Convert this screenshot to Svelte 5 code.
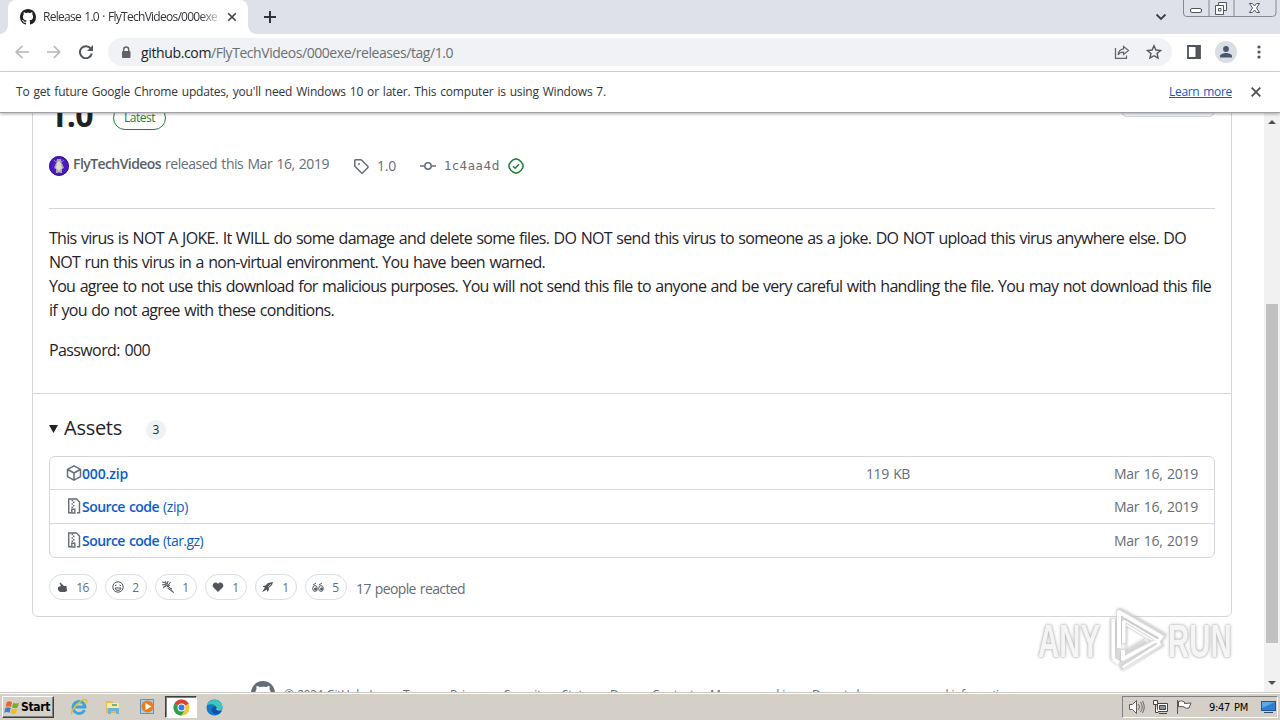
<script>
  const assets = [
    { icon: 'cube', name: '000.zip', ext: '', w: 46, ew: 0, size: '119 KB' },
    { icon: 'zip', name: 'Source code', ext: '(zip)', w: 77, ew: 25, size: '' },
    { icon: 'zip', name: 'Source code', ext: '(tar.gz)', w: 77, ew: 40, size: '' }
  ];
  const reactions = [
    { icon: 'thumb', n: 16 },
    { icon: 'smile', n: 2 },
    { icon: 'party', n: 1 },
    { icon: 'heart', n: 1 },
    { icon: 'rocket', n: 1 },
    { icon: 'eyes', n: 5 }
  ];
  const footer = [
    { t: '© 2024 GitHub, Inc.', slot: 119, w: 103 },
    { t: 'Terms', slot: 47, w: 31 },
    { t: 'Privacy', slot: 54, w: 39 },
    { t: 'Security', slot: 58, w: 43 },
    { t: 'Status', slot: 48, w: 33 },
    { t: 'Docs', slot: 42, w: 26 },
    { t: 'Contact', slot: 58, w: 42 },
    { t: 'Manage cookies', slot: 102, w: 87 },
    { t: 'Do not share my personal information', slot: 210, w: 200 }
  ];
  const body = [
    ['This virus is NOT A JOKE. It WILL do some damage and delete some files. DO NOT send this virus to someone as a joke. DO NOT upload this virus anywhere else. DO', 1137],
    ['NOT run this virus in a non-virtual environment. You have been warned.', 496],
    ['You agree to not use this download for malicious purposes. You will not send this file to anyone and be very careful with handling the file. You may not download this file', 1162],
    ['if you do not agree with these conditions.', 285]
  ];

  // Tracks text so that it spans the given width.
  function fit(node, width) {
    const n = node.textContent.length;
    const natural = node.getBoundingClientRect().width;
    node.style.letterSpacing = (width - natural) / n + 'px';
  }
</script>

{#snippet octocat(size)}
  <svg width={size} height={size} viewBox="0 0 16 16" fill="currentColor"><path d="M8 0C3.58 0 0 3.58 0 8c0 3.54 2.29 6.53 5.47 7.59.4.07.55-.17.55-.38 0-.19-.01-.82-.01-1.49-2.01.37-2.53-.49-2.69-.94-.09-.23-.48-.94-.82-1.13-.28-.15-.68-.52-.01-.53.63-.01 1.08.58 1.23.82.72 1.21 1.87.87 2.33.66.07-.52.28-.87.51-1.07-1.78-.2-3.64-.89-3.64-3.95 0-.87.31-1.59.82-2.15-.08-.2-.36-1.02.08-2.12 0 0 .67-.21 2.2.82.64-.18 1.32-.27 2-.27s1.36.09 2 .27c1.53-1.04 2.2-.82 2.2-.82.44 1.1.16 1.92.08 2.12.51.56.82 1.27.82 2.15 0 3.07-1.87 3.75-3.65 3.95.29.25.54.73.54 1.48 0 1.07-.01 1.93-.01 2.2 0 .21.15.46.55.38A8.01 8.01 0 0 0 16 8c0-4.42-3.58-8-8-8z" /></svg>
{/snippet}

<div class="screen">
  <div class="tabs">
    <div class="tab">
      {@render octocat(16)}
      <span class="tabtitle"><span use:fit={174}>Release 1.0 · FlyTechVideos/000exe</span></span>
      <svg class="tabx" width="10" height="10" viewBox="0 0 10 10" stroke="#3c4043" stroke-width="1.6"><path d="M1.2 1.2l7.6 7.6M8.8 1.2L1.2 8.8" /></svg>
    </div>
    <svg class="plus" width="12" height="12" viewBox="0 0 12 12" stroke="#303338" stroke-width="2"><path d="M6 0v12M0 6h12" /></svg>
    <svg class="chev" width="12" height="8" viewBox="0 0 12 8" fill="none" stroke="#3c4043" stroke-width="1.8"><path d="M1.5 1.5L6 6l4.500-4.500" /></svg>
    <div class="winbtns">
      <svg width="94" height="17" viewBox="0 0 94 17" fill="none" stroke="#85888e">
        <path d="M.5 0v13q0 3.500 3 3.500h86q3.500 0 3.500-3.500V0M26 0v16M51 0v16" />
        <rect x="7.500" y="8.500" width="11" height="4" rx="1.500" fill="#fff" stroke="#53565d" />
        <path d="M35.500 2.500h8v8h-8z" fill="#f4f5f7" stroke="#53565d" />
        <path d="M32.500 5.500h8v9h-8z" fill="#fff" stroke="#53565d" />
        <path d="M35.500 8.500h2.500v2.500h-2.500z" stroke="#53565d" />
        <path d="M66.500 3.500h3l2 2.500 2-2.500h3l-3 4.500 3 4.500h-3l-2-2.500-2 2.500h-3l3-4.500z" fill="#fff" stroke="#53565d" />
      </svg>
    </div>
  </div>

  <div class="toolbar">
    <svg width="14" height="14" viewBox="0 0 14 14" fill="none" stroke="#b4b7bb" stroke-width="1.7"><path d="M14 7H1.500M7.200 1L1.200 7l6 6" /></svg>
    <svg class="fwd" width="14" height="14" viewBox="0 0 14 14" fill="none" stroke="#b4b7bb" stroke-width="1.7"><path d="M0 7h12.500M6.800 1l6 6-6 6" /></svg>
    <svg class="reload" width="14" height="14" viewBox="0 0 14 14" fill="none" stroke="#53565b" stroke-width="2"><path d="M12 4A6 6 0 1 0 12.800 8.500" /><path d="M14 0v6H8z" fill="#53565b" stroke="none" /></svg>
    <div class="omni">
      <svg width="10" height="13" viewBox="0 0 10 13"><rect x="1" y="5" width="8.500" height="7" rx="1" fill="#5f6368" /><path d="M2.700 6V3.500a2.500 2.500 0 0 1 5 0V6" fill="none" stroke="#5f6368" stroke-width="1.400" /></svg>
      <span class="url"><span use:fit={70} class="host">github.com</span><span class="path" use:fit={242}>/FlyTechVideos/000exe/releases/tag/1.0</span></span>
      <svg width="16" height="14" viewBox="0 0 16 14" fill="none" stroke="#5f6368" stroke-width="1.200"><path d="M1.500 3v10.400h11V10.500" /><path d="M9.500 1.500l5 4-5 4V7.200C7 7.200 5.200 8 4 9.800 4.400 6.500 6.200 4.200 9.500 3.800z" /></svg>
      <svg class="star" width="16" height="16" viewBox="0 0 16 16" fill="none" stroke="#55585d" stroke-width="1.400"><path d="M8 1.700l1.900 4.300 4.700.45-3.550 3.100 1.050 4.600L8 11.700l-4.100 2.450 1.050-4.600L1.400 6.450l4.700-.45z" /></svg>
    </div>
    <svg class="side" width="14" height="14" viewBox="0 0 14 14"><path d="M1 1h12v12H1z" fill="none" stroke="#505357" stroke-width="1.800" /><path d="M8.500 1H13v12H8.500z" fill="#505357" /></svg>
    <svg class="person" width="22" height="22" viewBox="0 0 22 22"><circle cx="11" cy="11" r="11" fill="#dadde3" /><circle cx="11" cy="8" r="2.900" fill="#4a5570" /><path d="M5 16.500v-1.500c0-2 4-3 6-3s6 1 6 3v1.500z" fill="#4a5570" /></svg>
    <svg class="dots" width="4" height="14" viewBox="0 0 4 14" fill="#505357"><circle cx="2" cy="2" r="1.600" /><circle cx="2" cy="7" r="1.600" /><circle cx="2" cy="12" r="1.600" /></svg>
  </div>

  <div class="infobar">
    <span use:fit={590}>To get future Google Chrome updates, you'll need Windows 10 or later. This computer is using Windows 7.</span>
    <a class="learn" href="#learn"><span use:fit={63}>Learn more</span></a>
    <svg width="10" height="10" viewBox="0 0 10 10" stroke="#505357" stroke-width="1.900"><path d="M.7.7l8.600 8.600M9.300.7L.7 9.300" /></svg>
  </div>

  <div class="viewport">
    <div class="page">
      <section class="card">
        <div class="title"><h1 use:fit={44}>1.0</h1><span class="latest"><span use:fit={31}>Latest</span></span><span class="compare"></span></div>
        <div class="meta">
          <svg width="20" height="20" viewBox="0 0 20 20"><circle cx="10" cy="10" r="10" fill="#4a1cc0" /><circle cx="10" cy="10" r="9.300" fill="none" stroke="#32109a" /><path d="M8 3h4l1 4 2 5-2 1v4h-2l-1-1-1 1H7v-4l-2-1 2-5z" fill="#aaa4b3" /><path d="M8 7l2-2 2 3 1 4-3 3-3-3z" fill="#e0dccd" /><path d="M5 4l3 3M15 4l-3 3" stroke="#8d78c6" /></svg>
          <span class="who"><b use:fit={88}>FlyTechVideos</b><span class="rel" use:fit={164}>released this Mar 16, 2019</span></span>
          <svg class="tag" width="16" height="16" viewBox="0 0 16 16" fill="#656d76"><path d="M1 7.775V2.750C1 1.784 1.784 1 2.750 1h5.025c.464 0 .910.184 1.238.513l6.250 6.250a1.750 1.750 0 0 1 0 2.474l-5.026 5.026a1.750 1.750 0 0 1-2.474 0l-6.250-6.250A1.752 1.752 0 0 1 1 7.775Zm1.500 0c0 .066.026.130.073.177l6.250 6.250a.250.250 0 0 0 .354 0l5.025-5.025a.250.250 0 0 0 0-.354l-6.250-6.250a.250.250 0 0 0-.177-.073H2.750a.250.250 0 0 0-.250.250ZM6 5a1 1 0 1 1 0 2 1 1 0 0 1 0-2Z" /></svg>
          <span class="small" use:fit={19}>1.0</span>
          <svg class="commit" width="16" height="16" viewBox="0 0 16 16" fill="none" stroke="#656d76" stroke-width="1.500"><circle cx="8" cy="8" r="3.200" /><path d="M0 8h4.500M11.500 8H16" /></svg>
          <code class="small sha" use:fit={56}>1c4aa4d</code>
          <svg class="verified" width="16" height="16" viewBox="0 0 16 16" fill="none" stroke="#1a7f37" stroke-width="1.500"><path d="M5.300 1.700L8 .9l2.700.8 2.600 2.300 1.700 2.700v2.600l-1.700 2.700-2.600 2.300-2.700.8-2.700-.8L2.700 12 1 9.300V6.700L2.700 4z" /><path d="M5 8.200l2.100 2L11 6.200" /></svg>
        </div>
        <div class="notes">
          <p>{#each body as [text, w]}<span class="line"><span use:fit={w}>{text}</span></span>{/each}</p>
          <p><span class="line"><span use:fit={101}>Password: 000</span></span></p>
        </div>
        <div class="assets">
          <div class="ahead"><svg width="9" height="8" viewBox="0 0 9 8"><path d="M0 0h9L4.500 8z" fill="#1f2328" /></svg><h3 use:fit={58}>Assets</h3><span class="count">3</span></div>
          <ul>
            {#each assets as a}
              <li>
                {#if a.icon === 'cube'}
                  <svg width="16" height="16" viewBox="0 0 16 16" fill="none" stroke="#656d76" stroke-width="1.500" stroke-linejoin="round"><path d="M8 .8l6.500 3.600v7.200L8 15.200l-6.500-3.600V4.400zM1.700 4.500L8 8l6.300-3.500M8 8v7" /></svg>
                {:else}
                  <svg width="16" height="16" viewBox="0 0 16 16" fill="none" stroke="#656d76" stroke-width="1.400"><path d="M5 14.800H2.700V1h7.800l3 3v10.800H11" /><path d="M5.500 2.500H7M7 4.300h1.500M5.500 6H7M7 7.700h1.500M5.500 9.300H7" /><path d="M5.800 15v-3.800h3V15z" /></svg>
                {/if}
                <span class="aname"><b use:fit={a.w}>{a.name}</b>{#if a.ext}<span class="ext" use:fit={a.ew}>{a.ext}</span>{/if}</span>
                <span class="size">{#if a.size}<span use:fit={44}>{a.size}</span>{/if}</span>
                <span class="date"><span use:fit={84}>Mar 16, 2019</span></span>
              </li>
            {/each}
          </ul>
          <div class="reacts">
            {#each reactions as r}
              <span class="pill" class:wide={r.n > 9}>
                <svg width="12" height="12" viewBox="0 0 12 12" fill="none" stroke="#51565d">
                  {#if r.icon === 'thumb'}
                    <path d="M2 6l3-1-1.500-3 1-.5L8 5h2.500l.5 5-2 1H4L2 9z" fill="#51565d" stroke="none" />
                  {:else if r.icon === 'smile'}
                    <circle cx="6" cy="6" r="5.200" /><path d="M3 7h6q-.5 2.500-3 2.500T3 7zM3 4.700l1.500-.7M9 4.700L7.500 4" />
                  {:else if r.icon === 'party'}
                    <path d="M0 1l4 1M3 0l2 3M0 4l4-1M6 0L5 4M8.500 1l-3 4M1 7l3-2M3 3l5 4M8 4L4.500 6M1.500 5.500l3-1M6 5l5.500 6.500L5.500 7M8 7l2 1" />
                  {:else if r.icon === 'heart'}
                    <path d="M6 11L1 6C-.5 3 3.500-.5 6 3 8.500-.5 12.500 3 11 6z" fill="#51565d" stroke="none" />
                  {:else if r.icon === 'rocket'}
                    <path d="M11 1L6 2 3.500 4.500 1 5v1l2 .5L0 11l2.500-1 2-1.500L5.500 11 7 8.500 6.800 7 10 4z" fill="#51565d" stroke="none" /><path d="M6 6l3-3" stroke="#fff" stroke-width=".7" />
                  {:else}
                    <ellipse cx="3" cy="7.500" rx="2.300" ry="2.900" /><ellipse cx="9" cy="7.500" rx="2.300" ry="2.900" /><path d="M1 4l3-2M7 4l3-2" /><circle cx="3.500" cy="8" r="1" fill="#51565d" /><circle cx="9.500" cy="8" r="1" fill="#51565d" />
                  {/if}
                </svg>
                <span>{r.n}</span>
              </span>
            {/each}
            <span class="people" use:fit={109}>17 people reacted</span>
          </div>
        </div>
      </section>
      <footer>
        {@render octocat(24)}
        <div class="flinks">{#each footer as f}<span class="slot" style:width="{f.slot}px"><span use:fit={f.w}>{f.t}</span></span>{/each}</div>
      </footer>
    </div>
    <div class="scroll">
      <svg width="8" height="4" viewBox="0 0 8 4"><path d="M0 4l4-4 4 4z" fill="#505050" /></svg>
      <div class="thumb"></div>
      <svg class="down" width="8" height="4" viewBox="0 0 8 4"><path d="M0 0l4 4 4-4z" fill="#505050" /></svg>
    </div>
  </div>

  <div class="taskbar">
    <div class="start">
      <svg width="18" height="17" viewBox="0 0 16 16"><path d="M3 3q2.500-1.700 5 0L7 7.500q-2.500-1.500-5 0z" fill="#e8652b" /><path d="M9 3.500q2.500 1.500 5.500 0L13.300 8q-3 1.400-5.300 0z" fill="#79ad32" /><path d="M1.800 8.500q2.500-1.500 5 0l-1 4.500q-2.500-1.500-5.200 0z" fill="#3c83cb" /><path d="M7.800 9q2.500 1.500 5.300 0L12 13.500q-3 1.400-5.300 0z" fill="#efbd27" /></svg>
      <span use:fit={29}>Start</span>
    </div>
    <svg class="ie" width="18" height="18" viewBox="0 0 18 18" fill="none"><path d="M14.500 12A6 6 0 1 1 15 9H5" stroke="#3aa4dc" stroke-width="2.800" /><path d="M2 16C-.5 13.500 12-1 16.500 2c1 1 .3 2-.3 3" stroke="#e7ba35" stroke-width="1.500" /></svg>
    <svg class="folder" width="18" height="18" viewBox="0 0 18 18"><path d="M2 3h6l1.500 2H15v10H2z" fill="#e4bd52" /><path d="M3 5h12v5H3z" fill="#fbe9a0" /><path d="M4 16v-6h11v6h-3v-3H7v3z" fill="#6bb2d9" /><path d="M8 6h5v2H8z" fill="#7bb37b" /></svg>
    <svg class="wmp" width="18" height="18" viewBox="0 0 18 18"><path d="M1.500 1.500h13v14h-13z" fill="#a6d0ec" stroke="#5b94bf" /><circle cx="8.500" cy="8.500" r="6" fill="#ed7d1b" /><path d="M6.500 5l6 3.500-6 3.500z" fill="#fff" /></svg>
    <div class="active">
      <svg width="17" height="17" viewBox="0 0 18 18"><circle cx="9" cy="9" r="8.500" fill="#f4c62f" /><path d="M9 9L1.600 4.800A8.500 8.500 0 0 1 16.400 5z" fill="#dc4333" /><path d="M9 9l-7.400-4.200A8.500 8.500 0 0 0 9 17.500l3.500-6z" fill="#2c9f52" /><path d="M9 4.800h7.300" stroke="#dc4333" stroke-width="1" /><circle cx="9" cy="9" r="4.200" fill="#fff" /><circle cx="9" cy="9" r="3.200" fill="#397be6" /></svg>
    </div>
    <svg class="edge" width="17" height="17" viewBox="0 0 18 18"><circle cx="9" cy="9" r="8.500" fill="#1679c7" /><path d="M1 7C2.500-1 17-1.500 17.500 8c0 4-6 4.500-6.500 2C12 6.500 5 3.500 1 7z" fill="#3fc6b8" /><path d="M11 10c-1 2 2.500 4 5.500 2.500C13 19 5.500 16 6 11c.2-2 2-3 3.500-3s2 .8 1.500 2z" fill="#1353a3" /><path d="M11 10c0 1 .5 1.500 1.500 2h4.500l.5-1.500c-2 1.500-5 1.200-6.500-.5z" fill="#d4d0c8" /></svg>
    <div class="tray">
      <svg class="vol" width="17" height="16" viewBox="0 0 17 16" fill="none" stroke="#5b5b58"><path d="M1.500 5.500h3l4-4v13l-4-4h-3z" fill="#fff" /><path d="M10.500 5q2 3 0 6M12.500 3q3.500 5 0 10M14.500 2q3.500 6 0 12" stroke-width=".9" /></svg>
      <svg class="net" width="17" height="16" viewBox="0 0 17 16" fill="none" stroke="#454542"><path d="M5.500 4.500h10v8h-10z" fill="#fff" /><path d="M7.500 6.500h6v4h-6z" fill="#8c9192" /><path d="M1.500 1.500h4v4h-4zM3.500 6v7.500h3M7 14.500h8" fill="#fff" /></svg>
      <svg class="flag" width="17" height="16" viewBox="0 0 17 16" fill="#fff" stroke="#555552"><path d="M1.500 1v14" /><path d="M2.500 2.500q3-1.500 6 .5v1.500l6.500-.5-2 5q-3 1-5-1-3-1.500-5.500 0z" /></svg>
      <span class="clock"><span use:fit={39}>9:47 PM</span></span>
      <svg class="desk" width="16" height="14" viewBox="0 0 16 14"><path d="M0 1h15v10H0z" fill="#1c55a5" /><path d="M1 2h13v8H1z" fill="#317dd0" /><path d="M1 2h13L1 8z" fill="#5da8e6" /><path d="M3 12h9v1H3z" fill="#37495d" /></svg>
    </div>
  </div>

  <div class="watermark">
    <span class="wt"><span>ANY</span></span>
    <svg width="62" height="64" viewBox="0 0 62 64" fill="none" stroke-linejoin="round">
      <path d="M8 11v40M14 8l0-5 43 24-4 5L17 12v23M14 55V41M14 60l43-25M20 45l20-12" stroke="#d2d2d2" stroke-width="7" opacity=".4" />
      <path d="M7 11v40M13 40V4l43 25-4 5-34-20v21M7 51l6 4M17 42v9l32-18M17 60l38-24" stroke="#fff" stroke-width="4" />
      <path d="M5 10v42M17 3l42 25-5 6M20 15l28 17-28 14zM14 57l3 4 39-24" stroke="#dcdcdc" stroke-width="1.200" />
    </svg>
    <span class="wt run"><span>RUN</span></span>
  </div>
</div>

<style>
  :global(body) { margin: 0; background: #fff; }
  * { box-sizing: border-box; }
  svg { display: block; flex: none; }
  .screen { position: relative; width: 1280px; height: 720px; overflow: hidden; display: flex; flex-direction: column; font-family: "Open Sans", "Noto Sans", sans-serif; word-spacing: 1px; color: #1f2328; white-space: nowrap; background: #fff; }
  span, b, h1, h3, code { display: inline-block; }
  .tabs { height: 34px; background: #dee1e9; display: flex; padding-left: 8px; flex: none; }
  .tab { position: relative; width: 240px; height: 34px; background: #fff; border-radius: 8px 8px 0 0; display: flex; align-items: center; padding-left: 12px; color: #202124; }
  .tab::before, .tab::after { content: ""; position: absolute; bottom: 0; width: 8px; height: 8px; }
  .tab::before { left: -8px; background: radial-gradient(circle at 0 0, #dee1e9 7.500px, #fff 8px); }
  .tab::after { right: -8px; background: radial-gradient(circle at 100% 0, #dee1e9 7.500px, #fff 8px); }
  .tabtitle { width: 174px; margin-left: 7px; overflow: hidden; font-size: 12px; line-height: 18px; color: #303338; mask-image: linear-gradient(90deg, #000 90%, #0004 100%); }
  .tabx { margin-left: 10px; }
  .plus { margin: 11px 0 0 16px; }
  .chev { margin: 13px 0 0 auto; }
  .winbtns { margin: 0 3px 0 16px; }
  .toolbar { height: 38px; flex: none; display: flex; align-items: center; padding: 0 0 1px 15px; border-bottom: 1px solid #d7d9dc; }
  .fwd { margin-left: 18px; }
  .reload { margin-left: 18px; }
  .omni { margin-left: 15px; width: 1064px; flex: none; height: 28px; border-radius: 14px; background: #f0f2f5; display: flex; align-items: center; padding: 0 10px 0 13px; }
  .url { flex: 1; margin-left: 10px; padding-top: 2px; font-size: 14px; line-height: 20px; }
  .host { color: #202124; }
  .path { color: #6b6f74; }
  .star { margin-left: 16px; }
  .side { margin-left: 15px; }
  .person { margin-left: 14px; }
  .dots { margin-left: 20px; }
  .infobar { height: 41px; flex: none; display: flex; align-items: center; padding: 0 19px 0 16px; font-size: 12px; line-height: 20px; color: #303338; border-bottom: 1px solid #9fa1a4; box-shadow: 0 1px 3px #0005; position: relative; z-index: 1; background: #fff; }
  .learn { margin: 0 19px 0 auto; color: #185abc; text-decoration: none; }
  .learn span { text-decoration: underline; }
  .viewport { height: 579px; flex: none; display: flex; overflow: hidden; background: #fff; }
  .page { width: 1264px; padding: 0 32px; }
  .card { margin-top: -40px; height: 544px; width: 1200px; border: 1px solid #d2d5d9; border-radius: 6px; }
  .title { display: flex; align-items: center; height: 48px; margin: 17px 16px 0; }
  h1 { margin: 0; font-size: 32px; line-height: 48px; font-weight: 700; }
  .latest { margin: 5px 0 0 20px; height: 24px; width: 53px; border: 1px solid #1a7f37; border-radius: 12px; color: #1a7f37; font-size: 12px; line-height: 22px; padding-left: 10px; }
  .compare { margin: 0 0 24px auto; width: 94px; height: 28px; border: 1px solid #d2d5d9; border-radius: 6px; background: #f6f8fa; }
  .meta { display: flex; align-items: center; height: 70px; margin: 0 16px; padding-bottom: 16px; border-bottom: 1px solid #d2d5d9; color: #656d76; font-size: 14px; line-height: 20px; }
  .who { margin: -3px 24px 0 4px; }
  b { font-weight: 600; }
  .who b { color: #57606a; }
  .rel { margin-left: 4px; }
  .small { margin: 1px 0 0 8px; }
  .commit { margin-left: 24px; }
  .sha { font-family: "DejaVu Sans", sans-serif; font-size: 12px; }
  .verified { margin: 1px 0 0 8px; }
  .notes { height: 184px; padding: 17px 16px 0; font-size: 16px; line-height: 24px; }
  p { margin: 0 0 16px; }
  .line { display: block; height: 24px; }
  .assets { border-top: 1px solid #d2d5d9; padding: 22px 16px 0; }
  .ahead { display: flex; align-items: center; height: 24px; }
  .ahead svg { margin-top: 2px; }
  h3 { margin: 0 0 0 6px; font-size: 20px; line-height: 24px; font-weight: 400; }
  .count { margin: 3px 0 0 24px; width: 20px; height: 20px; border-radius: 10px; background: #f0f1f2; font-size: 12px; line-height: 20px; text-align: center; }
  ul { list-style: none; margin: 16px 0 0; padding: 0; border: 1px solid #d2d5d9; border-radius: 6px; height: 102px; }
  li { display: flex; align-items: center; height: 32px; padding: 0 16px; font-size: 14px; line-height: 20px; }
  li > span { margin-top: 2px; }
  li + li { height: 34px; border-top: 1px solid #d2d5d9; }
  li + li > svg { margin-top: -1px; }
  li + li > span { margin-top: 1px; }
  .aname { width: 784px; color: #0a5dc7; }
  .ext { margin-left: 4px; }
  .size { width: 248px; color: #656d76; }
  .date { color: #656d76; }
  .reacts { display: flex; margin-top: 16px; gap: 8px; }
  .pill { display: flex; align-items: center; width: 42px; height: 26px; border: 1px solid #d8dee4; border-radius: 13px; padding-left: 6px; font-size: 12px; line-height: 24px; color: #656d76; }
  .pill.wide { width: 48px; }
  .pill > span { flex: 1; text-align: center; letter-spacing: -.5px; padding: 1px 0 0 1px; }
  .people { margin: 4px 0 0 1px; font-size: 14px; line-height: 22px; color: #656d76; }
  footer { display: flex; margin: 64px 0 0 219px; color: #656d76; }
  .flinks { display: flex; margin: 5px 0 0 9px; font-size: 12px; line-height: 18px; }
  .slot { flex: none; }
  .scroll { width: 16px; background: #f1f1f1; display: flex; flex-direction: column; align-items: center; padding: 7px 0; }
  .thumb { width: 12px; height: 339px; margin-top: 180px; background: #c1c1c1; }
  .down { margin-top: auto; }
  .taskbar { height: 28px; flex: none; display: flex; align-items: center; background: #d4d0c8; border-top: 1px solid #c8c6c0; box-shadow: inset 0 1px #fff; padding: 1px 2px 0; }
  .start { display: flex; align-items: center; width: 52px; height: 22px; border: 1px solid; border-color: #fff #404040 #404040 #fff; box-shadow: inset -1px -1px #808080; font: bold 12px "DejaVu Sans Condensed", "DejaVu Sans", sans-serif; color: #000; }
  .ie { margin-left: 16px; }
  .folder { margin-left: 16px; }
  .wmp { margin-left: 17px; }
  .active { margin-left: 8px; width: 32px; height: 22px; border: 1px solid; border-color: #404040 #fff #fff #404040; box-shadow: inset 1px 1px #808080; background: #fff; display: flex; align-items: center; justify-content: center; }
  .edge { margin-left: 9px; }
  .tray { margin-left: auto; width: 156px; height: 22px; border: 1px solid; border-color: #808080 #fff #fff #808080; display: flex; align-items: center; padding-left: 5px; }
  .net { margin-left: 7px; }
  .flag { margin-left: 7px; }
  .clock { margin-left: 16px; width: 52px; font: 11px "DejaVu Sans Condensed", "DejaVu Sans", sans-serif; color: #000; }
  .watermark { position: absolute; left: 1038px; top: 608px; width: 198px; height: 66px; display: flex; z-index: 2; filter: drop-shadow(0 0 1.500px #999b); }
  .wt { width: 68px; padding-top: 7px; font: bold 46px/52px "Liberation Sans", sans-serif; color: #f5f5f5; text-shadow: 0 0 2px #bbb; }
  .wt span { transform: scaleX(.64); transform-origin: 0 50%; }
</style>
